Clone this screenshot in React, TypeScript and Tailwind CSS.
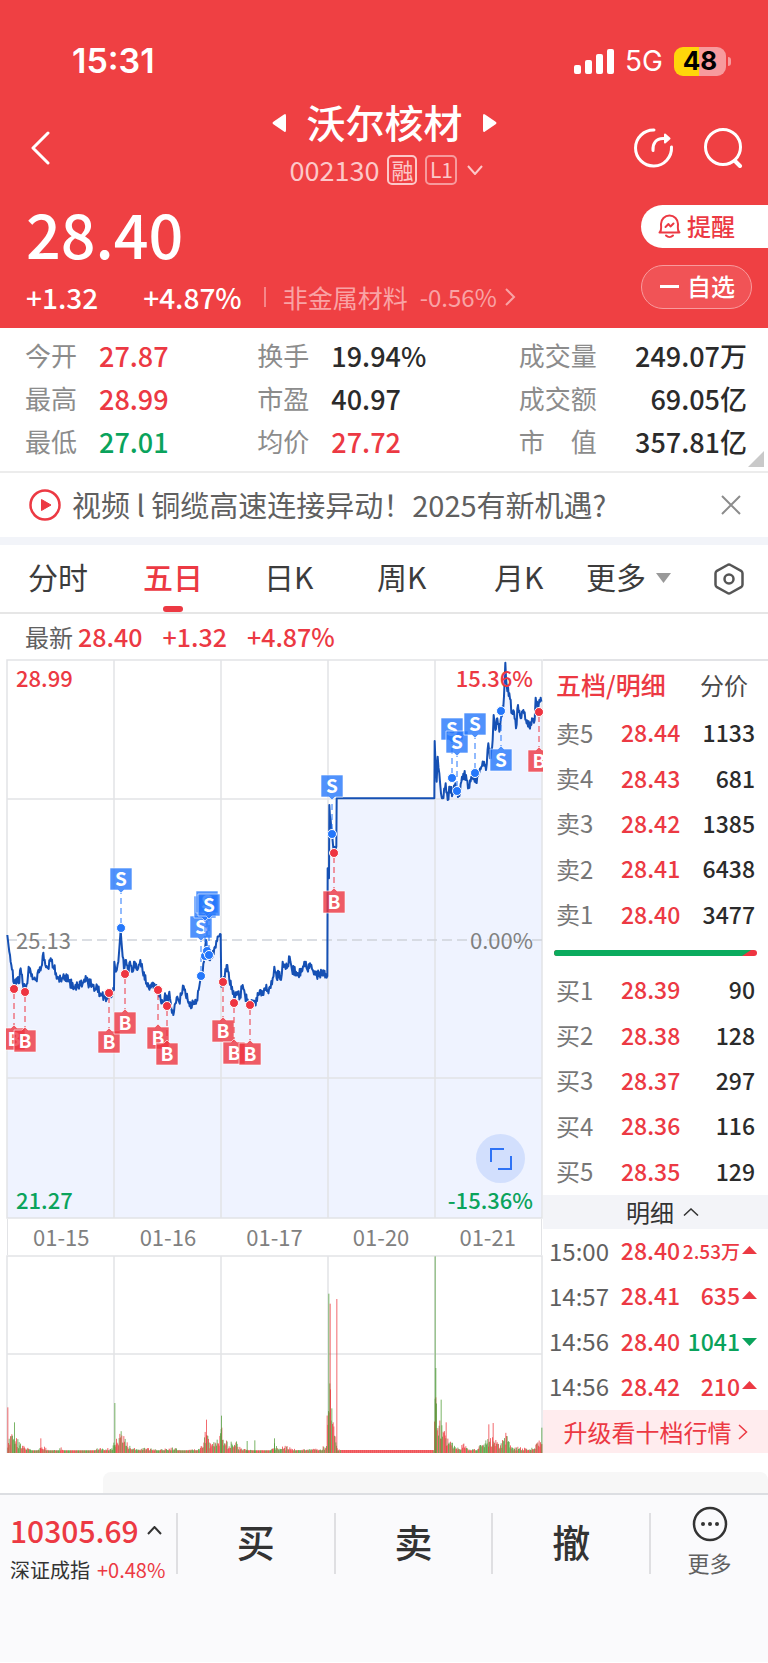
import { useState } from "react";

const UP = "text-[#ec3943]";
const DOWN = "text-[#0aa35c]";

const stats = [
  { label: "今开", value: "27.87", color: UP },
  { label: "换手", value: "19.94%", color: "text-[#2b2b2b]" },
  { label: "成交量", value: "249.07万", color: "text-[#2b2b2b]" },
  { label: "最高", value: "28.99", color: UP },
  { label: "市盈", value: "40.97", color: "text-[#2b2b2b]" },
  { label: "成交额", value: "69.05亿", color: "text-[#2b2b2b]" },
  { label: "最低", value: "27.01", color: DOWN },
  { label: "均价", value: "27.72", color: UP },
  { label: "市　值", value: "357.81亿", color: "text-[#2b2b2b]" },
];

const tabs = ["分时", "五日", "日K", "周K", "月K"];

const sells = [
  ["卖5", "28.44", "1133"],
  ["卖4", "28.43", "681"],
  ["卖3", "28.42", "1385"],
  ["卖2", "28.41", "6438"],
  ["卖1", "28.40", "3477"],
];

const buys = [
  ["买1", "28.39", "90"],
  ["买2", "28.38", "128"],
  ["买3", "28.37", "297"],
  ["买4", "28.36", "116"],
  ["买5", "28.35", "129"],
];

const ticks = [
  { time: "15:00", price: "28.40", qty: "2.53万", up: true },
  { time: "14:57", price: "28.41", qty: "635", up: true },
  { time: "14:56", price: "28.40", qty: "1041", up: false },
  { time: "14:56", price: "28.42", qty: "210", up: true },
];

const dates = ["01-15", "01-16", "01-17", "01-20", "01-21"];

// price line, x y pairs in thirds of a unit
const firstHalf = [
  22, 855, 26, 890, 34, 945, 42, 1000, 50, 985, 56, 1000, 62, 955, 68, 1000, 75, 1015, 82, 1000, 86, 950, 92, 965,
  100, 985, 108, 990, 115, 960, 124, 950, 130, 908, 136, 945, 144, 955, 152, 925, 160, 950, 172, 980, 182, 990,
  195, 978, 205, 992, 222, 1012, 235, 1005, 248, 1000, 257, 978, 264, 1000, 276, 1003, 285, 1020, 292, 1010,
  300, 1030, 312, 1040, 320, 1048, 328, 1030, 336, 1035, 342, 1020, 343, 935, 348, 965, 355, 935, 362, 840,
  366, 895, 372, 960, 378, 930, 384, 965, 390, 935, 398, 965, 404, 935, 412, 960, 421, 930, 428, 965, 440, 1000,
  446, 1012, 455, 1000, 465, 1015, 475, 1020, 482, 1050, 490, 1055, 495, 1030, 502, 1060, 508, 1025, 514, 1075,
  520, 1095, 526, 1060, 532, 1040, 537, 1055, 544, 1035, 551, 1008, 557, 1035, 563, 1050, 573, 1075, 582, 1055,
  590, 1050, 596, 1020, 602, 985, 606, 975, 612, 935, 618, 870, 622, 900, 628, 930, 635, 915, 645, 890, 655, 860,
  660, 852, 662, 853, 664, 1010, 672, 980, 682, 945, 688, 990, 696, 1010, 703, 1045, 712, 1025, 720, 1040,
  728, 1005, 735, 1035, 745, 1060, 755, 1050, 765, 1060, 775, 1035, 782, 1020, 788, 1035, 795, 1015, 803, 1020,
  810, 1010, 818, 985, 823, 950, 830, 985, 838, 965, 843, 990, 848, 935, 855, 950, 863, 950, 869, 920, 876, 960,
  888, 965, 895, 975, 905, 965, 913, 935, 922, 960, 930, 940, 940, 965, 950, 975, 965, 972, 982, 978,
];
const secondHalf = [
  983, 655, 987, 685, 988, 465, 992, 510, 996, 550, 1000, 595, 1006, 600, 1009, 590, 1010, 445, 1303, 445,
  1304, 273, 1310, 395, 1313, 320, 1318, 370, 1323, 430, 1328, 445, 1337, 400, 1343, 450, 1350, 410, 1358, 430,
  1366, 400, 1372, 425, 1378, 438, 1386, 380, 1398, 375, 1406, 412, 1414, 380, 1422, 375, 1428, 398, 1436, 370,
  1444, 350, 1452, 335, 1458, 360, 1465, 280, 1470, 325, 1478, 270, 1481, 195, 1486, 240, 1492, 205, 1498, 245,
  1504, 200, 1510, 170, 1514, 90, 1516, 38, 1520, 105, 1528, 130, 1536, 190, 1542, 185, 1548, 235, 1554, 165,
  1562, 205, 1570, 180, 1578, 210, 1588, 232, 1596, 205, 1604, 210, 1607, 143, 1613, 180, 1618, 150, 1624, 155,
];

// type, x, dot y, flag y
const flags: [string, number, number, number][] = [
  ["B", 14, 989, 1039],
  ["B", 25, 992, 1041],
  ["B", 109, 993, 1042],
  ["S", 121, 928, 879],
  ["B", 125, 974, 1023],
  ["B", 158, 990, 1038],
  ["B", 167, 1006, 1054],
  ["S", 201, 976, 927],
  ["S", 205, 956, 907],
  ["S", 207, 951, 902],
  ["S", 209, 955, 905],
  ["B", 223, 982, 1031],
  ["B", 234, 1003, 1053],
  ["B", 250, 1005, 1054],
  ["S", 332, 834, 786],
  ["B", 334, 853, 902],
  ["S", 452, 778, 729],
  ["S", 457, 791, 742],
  ["S", 475, 773, 724],
  ["S", 501, 711, 760],
  ["B", 539, 712, 761],
];

// volume envelope: x, height (thirds of a unit)
const envelope = [
  22, 45, 34, 58, 48, 48, 60, 30, 75, 20, 90, 12, 110, 8, 120, 20, 132, 20, 145, 8, 170, 10, 182, 18, 195, 8, 275, 8,
  290, 18, 310, 14, 335, 16, 343, 50, 350, 45, 362, 70, 374, 45, 390, 20, 410, 12, 440, 18, 470, 10, 520, 18, 540, 8,
  590, 12, 604, 25, 612, 50, 618, 95, 628, 35, 645, 35, 655, 60, 663, 80, 672, 45, 686, 28, 702, 45, 720, 16, 740, 10,
  810, 8, 822, 30, 835, 12, 850, 22, 870, 20, 890, 10, 960, 14, 978, 30, 984, 300, 990, 230, 996, 110, 1005, 60,
  1012, 16, 1025, 5, 1300, 5, 1303, 240, 1308, 200, 1316, 110, 1326, 85, 1338, 50, 1355, 32, 1375, 16, 1392, 36,
  1405, 12, 1430, 15, 1445, 35, 1465, 45, 1482, 55, 1500, 25, 1516, 70, 1530, 25, 1560, 18, 1590, 14, 1610, 30,
  1625, 50,
];
const spikes: [number, number, boolean][] = [
  [22, 137, true],
  [42, 92, false],
  [121, 44, true],
  [343, 150, false],
  [618, 100, true],
  [663, 112, false],
  [740, 36, false],
  [763, 38, false],
  [822, 44, false],
  [985, 478, false],
  [989, 448, true],
  [1009, 462, true],
  [1304, 590, false],
  [1306, 255, false],
  [1322, 160, false],
  [1337, 92, true],
  [1465, 86, true],
  [1478, 90, true],
  [1624, 76, false],
];

const makeRandom = (seed: number) => () => {
  seed = (seed * 16807) % 2147483647;
  return seed / 2147483647;
};

const buildLine = (pts: number[]) => {
  const rnd = makeRandom(77);
  const out: string[] = [];
  for (let i = 0; i < pts.length; i += 2) {
    const x = pts[i];
    const y = pts[i + 1];
    out.push(`${x / 3},${650 + y / 3}`);
    const dx = pts[i + 2] - x;
    const dy = pts[i + 3] - y;
    if (dx > 3 && dx < 40) {
      const n = Math.floor(dx / 2);
      for (let k = 1; k < n; k++) {
        const jitter = (k % 2 ? 1 : -1) * rnd() * 14;
        out.push(`${(x + (dx * k) / n) / 3},${650 + (y + (dy * k) / n + jitter) / 3}`);
      }
    }
  }
  return out.join(" ");
};

const buildBars = () => {
  const rnd = makeRandom(2130);
  const bars: { x: number; h: number; up: boolean }[] = [];
  let i = 0;
  for (let x = 22; x < 1625; x += 2) {
    while (i + 4 < envelope.length && envelope[i + 2] < x) i += 2;
    const t = (x - envelope[i]) / (envelope[i + 2] - envelope[i]);
    const env = envelope[i + 1] + (envelope[i + 3] - envelope[i + 1]) * t;
    const halted = x > 1020 && x < 1300;
    const r = rnd();
    bars.push({ x, h: halted ? 9 : Math.max(8, env * (0.35 + 0.65 * r)), up: halted || rnd() > 0.5 });
  }
  spikes.forEach(([x, h, up]) => bars.push({ x, h, up }));
  return bars;
};

const line = buildLine([...firstHalf, ...secondHalf]);
const bars = buildBars();
const columns = [114, 221, 328, 435];

const StatusBar = () => (
  <div className="flex h-[92px] items-center justify-between pl-[72px] pr-[37px] pt-[30px] font-['Inter',sans-serif] text-white">
    <span className="text-[34px] font-semibold leading-none">15:31</span>
    <div className="flex items-center gap-[11px]">
      <svg className="h-[25px] w-10" viewBox="0 0 40 25" fill="currentColor">
        <rect x="0" y="16" width="7" height="9" rx="2" />
        <rect x="11" y="11" width="7" height="14" rx="2" />
        <rect x="22" y="5" width="7" height="20" rx="2" />
        <rect x="33" y="0" width="7" height="25" rx="2" />
      </svg>
      <span className="text-[28px] leading-none">5G</span>
      <div className="flex items-center gap-[2px]">
        <div className="flex h-[29px] w-[52px] items-center justify-center rounded-[9px] bg-linear-to-r from-[#ffd60a] from-48% to-[#f79a9d] to-48% text-[26px] font-bold leading-none text-black">
          48
        </div>
        <div className="h-[9px] w-[3px] rounded-r-full bg-[#f79a9d]" />
      </div>
    </div>
  </div>
);

const TitleBar = () => (
  <nav className="grid h-28 grid-cols-[1fr_auto_1fr] items-center pl-[30px] pr-[25px] text-white">
    <button className="w-fit" aria-label="返回">
      <svg className="h-[34px] w-5" viewBox="0 0 20 34" fill="none" stroke="currentColor" strokeWidth="3">
        <path d="M18 2L3 17l15 15" strokeLinecap="round" strokeLinejoin="round" />
      </svg>
    </button>
    <div className="self-start">
      <div className="flex h-[62px] items-center justify-center gap-5 pr-1">
        <button aria-label="上一只">
          <svg className="h-5 w-[14px]" viewBox="0 0 14 20" fill="currentColor">
            <path d="M12 1.500Q14 0 14 3V17Q14 20 12 18.500L1 11Q0 10 1 9z" />
          </svg>
        </button>
        <h1 className="pb-[3px] text-[39px] font-medium leading-none">沃尔核材</h1>
        <button aria-label="下一只">
          <svg className="h-5 w-[14px]" viewBox="0 0 14 20" fill="currentColor">
            <path d="M2 1.500Q0 0 0 3V17Q0 20 2 18.500L13 11Q14 10 13 9z" />
          </svg>
        </button>
      </div>
      <div className="flex h-8 items-center justify-center gap-2 text-[#fcc8c9]">
        <span className="pb-[2px] text-[27px] leading-none">002130</span>
        <span className="flex h-[30px] w-[30px] items-center justify-center rounded-[5px] border-2 pb-[2px] text-[22px] leading-none">
          融
        </span>
        <span className="flex h-[30px] w-8 items-center justify-center rounded-[5px] border-2 border-[#f79a9d] pb-[2px] text-[21px] leading-none">
          L1
        </span>
        <svg className="ml-[2px] h-[10px] w-4" viewBox="0 0 16 10" fill="none" stroke="currentColor" strokeWidth="2">
          <path d="M1 1l7 8 7-8" />
        </svg>
      </div>
    </div>
    <div className="flex items-center justify-end gap-[30px]">
      <button aria-label="分享">
        <svg className="h-10 w-10" viewBox="0 0 40 40" fill="none" stroke="currentColor" strokeWidth="3" strokeLinecap="round">
          <path d="M20 2A18 18 0 1 0 37.500 19" />
          <path d="M19 22.500C18.500 15.500 22 10.500 29 10.500h4" />
          <path d="M31 6.500l4.500 4-4.500 4z" fill="currentColor" strokeWidth="2" strokeLinejoin="round" />
        </svg>
      </button>
      <button aria-label="搜索">
        <svg className="h-10 w-[39px]" viewBox="0 0 39 40" fill="none" stroke="currentColor" strokeLinecap="round">
          <circle cx="19" cy="19" r="17.500" strokeWidth="3" />
          <path d="M31 33l5 5" strokeWidth="4" />
        </svg>
      </button>
    </div>
  </nav>
);

const PriceHeader = () => (
  <div className="flex justify-between pb-[2px] pl-[26px]">
    <div className="text-white">
      <div className="flex h-[66px] items-center pb-[9px] text-[61px] font-medium leading-none">28.40</div>
      <div className="flex h-14 items-center pb-[2px] text-[28px] font-medium leading-none">
        <span>+1.32</span>
        <span className="ml-[45px]">+4.87%</span>
        <a href="#" className="ml-[22px] flex items-center border-l-2 border-[#f68689] pl-[17px] text-[25px] font-normal leading-5 text-[#f9a3a5]">
          非金属材料
          <span className="ml-3 text-2xl leading-5">-0.56%</span>
          <svg className="ml-2 h-[18px] w-[11px]" viewBox="0 0 11 18" fill="none" stroke="currentColor" strokeWidth="2">
            <path d="M1 1l8 8-8 8" />
          </svg>
        </a>
      </div>
    </div>
    <div className="flex flex-col gap-[17px] pt-px text-2xl font-medium leading-none">
      <button className="flex h-[43px] w-[127px] items-center gap-[6px] rounded-l-full bg-white pb-[2px] pl-[17px] text-[#ec3943]">
        <svg className="h-6 w-[23px]" viewBox="0 0 23 24" fill="none" stroke="currentColor" strokeWidth="2" strokeLinecap="round" strokeLinejoin="round">
          <path d="M1.500 18.500C4 16.500 3 13 3 10a8.500 8.500 0 0 1 17 0c0 3-1 6.500 1.500 8.500z" />
          <path d="M8 21.500c2 2 5 2 7 0" />
          <path d="M7.500 13l3-3 2 2.500 3-3" />
        </svg>
        提醒
      </button>
      <button className="flex h-11 w-[111px] items-center gap-2 rounded-full border border-[#f89b9d] bg-[#f15356] pb-[2px] pl-[18px] text-white">
        <span className="h-[3px] w-[19px] bg-white" />
        自选
      </button>
    </div>
  </div>
);

const Stats = () => (
  <section className="relative grid grid-cols-[232fr_261fr_228fr] border-b-2 border-[#ececec] pb-2 pl-[25px] pr-[21px] pt-[6px]">
    {stats.map(({ label, value, color }, i) => (
      <div key={label} className={`flex h-[43px] items-center leading-none ${i % 3 === 2 ? "justify-between" : "gap-[22px]"}`}>
        <span className="pb-[2px] text-[26px] text-[#8c8c8c]">{label}</span>
        <span className={`text-[27px] font-medium ${color}`}>{value}</span>
      </div>
    ))}
    <svg className="absolute bottom-1 right-1 h-4 w-4" viewBox="0 0 16 16" fill="#c9c9c9">
      <path d="M16 0v16H0z" />
    </svg>
  </section>
);

const NewsBar = () => (
  <div className="flex h-16 items-center pl-[29px] pr-[27px]">
    <svg className="h-8 w-8 shrink-0" viewBox="0 0 32 32">
      <circle cx="16" cy="16" r="14.500" fill="none" stroke="#ec3943" strokeWidth="2.500" />
      <path d="M12.500 10.500v11l9.500-5.500z" fill="#ec3943" stroke="#ec3943" strokeLinejoin="round" />
    </svg>
    <a href="#" className="ml-[11px] grow whitespace-nowrap pb-[2px] text-[29px] leading-none text-[#606060]">
      视频 l 铜缆高速连接异动！2025有新机遇?
    </a>
    <button aria-label="关闭" className="text-[#8c8c8c]">
      <svg className="h-5 w-5" viewBox="0 0 20 20" fill="none" stroke="currentColor" strokeWidth="2">
        <path d="M1 1l18 18M19 1L1 19" />
      </svg>
    </button>
  </div>
);

const Tabs = () => {
  const [active, setActive] = useState("五日");

  return (
    <div className="grid h-[69px] grid-cols-[115fr_121fr_113fr_117fr_92fr_128fr_auto] border-b-2 border-[#e6e6e6] pl-7 pr-6 text-[30px] leading-none text-[#3c3c3c]">
      {tabs.map((tab) => (
        <button
          key={tab}
          onClick={() => setActive(tab)}
          className={`relative flex w-fit items-center pb-[5px] ${tab === active ? "font-medium text-[#ec3943]" : ""}`}
        >
          {tab}
          {tab === active && <span className="absolute bottom-0 left-5 h-[6px] w-5 rounded-[3px] bg-[#ec3943]" />}
        </button>
      ))}
      <button className="flex items-center gap-[10px] pb-[5px]">
        更多
        <svg className="mt-1 h-[10px] w-[15px]" viewBox="0 0 15 10" fill="#999999">
          <path d="M0 0h15L7.500 10z" />
        </svg>
      </button>
      <button aria-label="设置" className="text-[#555555]">
        <svg className="h-8 w-[30px]" viewBox="0 0 30 32" fill="none" stroke="currentColor" strokeWidth="2.500" strokeLinejoin="round">
          <path d="M13.500 2Q15 1 16.500 2l11 6.200Q28.500 9 28.500 10.500v11q0 1.500-1 2.300l-11 6.200q-1.500 1-3 0l-11-6.200q-1-.8-1-2.300v-11q0-1.500 1-2.300z" />
          <circle cx="15" cy="16" r="4.500" />
        </svg>
      </button>
    </div>
  );
};

const Flag = ({ type, x, dotY, y }: { type: string; x: number; dotY: number; y: number }) => {
  const color = type === "B" ? "#ee3440" : "#2477fb";
  const dir = dotY > y ? 1 : -1;
  return (
    <g>
      <line x1={x} x2={x} y1={dotY - dir * 4} y2={y + dir * 14} stroke={color} strokeDasharray="6 4" />
      <path
        d={`M${x - 11} ${y - 11 * dir}h22v${22 * dir}h-8l-3 ${3 * dir}l-3 ${-3 * dir}h-8z`}
        fill={color}
        fillOpacity="0.8"
        stroke="#ffffff"
        strokeOpacity="0.6"
      />
      <circle cx={x} cy={dotY} r="4.500" fill={color} stroke="#ffffff" />
      <text x={x} y={y + 7} textAnchor="middle" fontSize="19" fontWeight="700" fill="#ffffff">
        {type}
      </text>
    </g>
  );
};

const PriceChart = () => (
  <div className="relative text-[22px] font-medium leading-none">
    <svg className="block h-auto w-full" viewBox="6 659 537 560">
      <polygon points={`7,1218 ${line} 542,702 542,1218`} fill="#eff3ff" />
      <g stroke="#e2e3e6" strokeWidth="1.500">
        {columns.map((x) => (
          <line key={x} x1={x} x2={x} y1="660" y2="1218" />
        ))}
        <line x1="7" x2="542" y1="799" y2="799" />
        <line x1="7" x2="542" y1="1078" y2="1078" />
        <rect x="7" y="660" width="535" height="558" fill="none" />
      </g>
      <line x1="7" x2="542" y1="940" y2="940" stroke="#cfd3da" strokeWidth="1.500" strokeDasharray="10 5" />
      <polyline points={line} fill="none" stroke="#1550b4" strokeWidth="2" strokeLinejoin="round" />
      {flags.map(([type, x, dotY, y]) => (
        <Flag key={`${x}-${dotY}`} type={type} x={x} dotY={dotY} y={y} />
      ))}
    </svg>
    <span className={`absolute left-[10px] top-[7px] ${UP}`}>28.99</span>
    <span className={`absolute right-[10px] top-[7px] ${UP}`}>15.36%</span>
    <span className="absolute left-[10px] top-1/2 -translate-y-1/2 font-normal text-[#808080]">25.13</span>
    <span className="absolute right-[10px] top-1/2 -translate-y-1/2 font-normal text-[#808080]">0.00%</span>
    <span className={`absolute bottom-[9px] left-[10px] ${DOWN}`}>21.27</span>
    <span className={`absolute bottom-[9px] right-[10px] ${DOWN}`}>-15.36%</span>
    <button aria-label="全屏" className="absolute bottom-9 right-[18px] flex h-[49px] w-[49px] items-center justify-center rounded-full bg-[#d2dffd]">
      <svg className="h-[22px] w-[22px]" viewBox="0 0 22 22" fill="none" stroke="#2f73f5" strokeWidth="2">
        <path d="M1 14V1h13M21 8v13H8" />
      </svg>
    </button>
  </div>
);

const VolumeChart = () => (
  <svg className="block h-auto w-full" viewBox="6 1255 537 198">
    <g stroke="#e2e3e6" strokeWidth="1.500">
      {columns.map((x) => (
        <line key={x} x1={x} x2={x} y1="1256" y2="1453" />
      ))}
      <line x1="7" x2="542" y1="1354" y2="1354" />
      <path d="M7 1453V1256H542V1453" fill="none" />
    </g>
    {bars.map(({ x, h, up }, i) => (
      <rect key={i} x={x / 3} y={1453 - h / 3} width="1" height={h / 3} fill={up ? "#ee3a3f" : "#4f9c35"} fillOpacity="0.75" />
    ))}
  </svg>
);

const Quotes = ({ rows }: { rows: string[][] }) => (
  <table className="h-[227px] w-full text-2xl leading-none">
    <tbody>
      {rows.map(([name, price, qty]) => (
        <tr key={name}>
          <td className="w-[78px] pb-[2px] pl-[13px] text-[#777777]">{name}</td>
          <td className={`pb-[2px] text-[23px] font-medium ${UP}`}>{price}</td>
          <td className="pb-[2px] pr-[13px] text-right text-[23px] font-medium text-[#2b2b2b]">{qty}</td>
        </tr>
      ))}
    </tbody>
  </table>
);

const OrderBook = () => (
  <aside className="w-[225px] shrink-0 border-t-2 border-[#e2e3e6]">
    <div className="flex h-[50px] items-center justify-between pb-[3px] pl-[13px] pr-5 leading-none">
      <button className="text-[25px] font-medium text-[#ec3943]">五档/明细</button>
      <button className="text-2xl leading-none text-[#4a4a4a]">分价</button>
    </div>
    <Quotes rows={sells} />
    <div className="flex h-[30px] items-center pl-[11px] pr-[11px]">
      <svg className="h-[6px] w-full" viewBox="0 0 203 6" preserveAspectRatio="none">
        <rect width="203" height="6" rx="3" fill="#ee3440" />
        <path d="M3 0H197L188 6H3Q0 6 0 3T3 0z" fill="#0bab5e" />
      </svg>
    </div>
    <Quotes rows={buys} />
    <button className="flex h-[34px] w-full items-center justify-center gap-[9px] bg-[#f3f4f8] pl-[14px] text-2xl leading-none text-[#333333]">
      明细
      <svg className="h-2 w-4" viewBox="0 0 16 8" fill="none" stroke="currentColor" strokeWidth="1.500">
        <path d="M1 7.500l7-6.500 7 6.500" />
      </svg>
    </button>
    <table className="h-[181px] w-full whitespace-nowrap text-2xl leading-none">
      <tbody>
        {ticks.map(({ time, price, qty, up }, i) => (
          <tr key={i}>
            <td className="w-[78px] pb-[2px] pl-[6px] text-[#606060]">{time}</td>
            <td className={`w-[62px] pb-[2px] text-[23px] font-medium ${UP}`}>{price}</td>
            <td className={`pb-[2px] pr-[11px] ${up ? UP : DOWN}`}>
              <div className={`flex h-6 items-center justify-end gap-[2px] font-medium ${qty.length > 4 ? "text-[19px]" : "text-[23px]"}`}>
                {qty}
                <svg className="h-[10px] w-[15px]" viewBox="0 0 15 10" fill="currentColor">
                  <path d={up ? "M0 8L7.500 0 15 8z" : "M0 2L7.500 10 15 2z"} />
                </svg>
              </div>
            </td>
          </tr>
        ))}
      </tbody>
    </table>
    <a href="#" className="flex h-[43px] items-center justify-center gap-[6px] bg-[#ffecee] text-2xl leading-none text-[#ec3943]">
      升级看十档行情
      <svg className="h-4 w-[10px]" viewBox="0 0 10 16" fill="none" stroke="currentColor" strokeWidth="1.500">
        <path d="M1 1l7.500 7L1 15" />
      </svg>
    </a>
  </aside>
);

const BottomBar = () => (
  <footer className="flex h-[169px] items-start border-t-2 border-[#dcdee2] bg-[#fafafc] pt-[18px] text-[#333333]">
    <button className="h-[61px] w-[176px] shrink-0 pl-[10px] text-left leading-none">
      <div className={`flex h-9 items-center gap-2 pb-[2px] text-[30px] font-medium ${UP}`}>
        10305.69
        <svg className="h-[9px] w-[15px]" viewBox="0 0 15 9" fill="none" stroke="#333333" strokeWidth="2">
          <path d="M1 8l6.500-7L14 8" />
        </svg>
      </div>
      <div className="mt-[11px] flex gap-[7px] text-xl leading-none">
        深证成指 <span className={UP}>+0.48%</span>
      </div>
    </button>
    {["买", "卖", "撤"].map((name) => (
      <button key={name} className="h-[61px] flex-1 border-l-2 border-[#dfdfe2] pb-[5px] text-[38px] font-medium leading-none">
        {name}
      </button>
    ))}
    <button className="flex h-[61px] w-[119px] shrink-0 justify-center border-l-2 border-[#dfdfe2] text-[22px] leading-none text-[#606060]">
      <span className="-mt-[7px] flex flex-col items-center gap-[9px]">
        <svg className="h-9 w-9" viewBox="0 0 36 36" fill="#333333">
          <circle cx="18" cy="18" r="16" fill="none" stroke="#333333" strokeWidth="2.500" />
          <circle cx="11" cy="18" r="2" />
          <circle cx="18" cy="18" r="2" />
          <circle cx="25" cy="18" r="2" />
        </svg>
        更多
      </span>
    </button>
  </footer>
);

const App = () => {
  return (
    <div className="overflow-hidden bg-white font-['Noto_Sans_CJK_SC',sans-serif]">
      <header className="bg-[#ef4043]">
        <StatusBar />
        <TitleBar />
        <PriceHeader />
      </header>
      <Stats />
      <NewsBar />
      <div className="h-2 bg-[#f2f4f9]" />
      <Tabs />
      <div className="flex h-[45px] items-center pl-[25px] text-[25px] font-medium leading-none">
        <span className="text-2xl font-normal leading-none text-[#606060]">最新</span>
        <span className={`ml-[5px] ${UP}`}>28.40</span>
        <span className={`ml-5 ${UP}`}>+1.32</span>
        <span className={`ml-5 ${UP}`}>+4.87%</span>
      </div>
      <main className="flex">
        <div className="min-w-0 grow pl-[6px]">
          <PriceChart />
          <div className="mx-px grid h-9 grid-cols-5 items-center border-x border-[#e2e3e6] pb-[2px] text-center text-[22px] leading-none text-[#808080]">
            {dates.map((d) => (
              <span key={d}>{d}</span>
            ))}
          </div>
          <VolumeChart />
        </div>
        <OrderBook />
      </main>
      <div className="ml-[103px] mt-[19px] h-[21px] rounded-t-lg bg-[#f7f7f7]" />
      <BottomBar />
    </div>
  );
};

export default App;
